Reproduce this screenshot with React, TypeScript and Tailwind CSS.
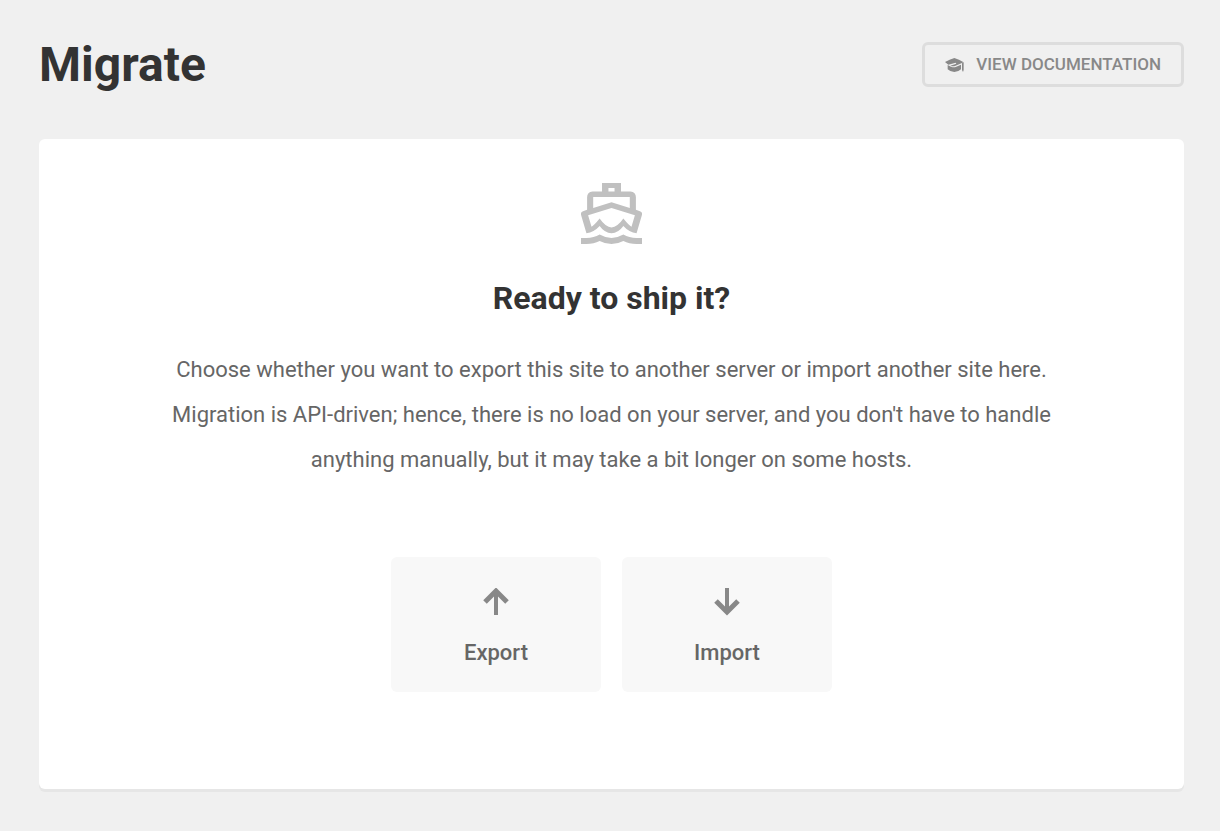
import { ReactNode } from "react";

function ShipIcon() {
  return (
    <svg viewBox="0 0 180 180" className="size-[61px]" fill="currentColor" aria-hidden="true">
      <path
        fillRule="evenodd"
        d="M62 0H118V25H146Q162 27 162 42V79L174 83Q182 86 180 94L164 148Q142 146 125 127Q110 148 90 148Q70 148 55 127Q38 146 16 148L0 94Q-2 86 6 83L18 79V42Q18 27 34 25H62ZM81 15V25H99V15ZM36 41V74L90 57L144 74V41ZM90 74L21 95L31 129Q38 126 55 105Q73 131 90 131Q107 131 125 105Q142 126 149 129L159 95Z"
      />
      <path d="M0 162H16Q38 162 55 152Q72 162 90 162Q108 162 125 152Q142 162 164 162H180V180H164Q142 180 125 171Q108 180 90 180Q72 180 55 171Q38 180 16 180H0Z" />
    </svg>
  );
}

function CapIcon() {
  return (
    <svg viewBox="0 0 57 42" className="h-[14px] w-[19px]" fill="currentColor" aria-hidden="true">
      <path d="M0 12Q14 5 28 0Q42 4 56 13L30 24Q24 26 16 23L34 17L32 14L10 20Z" />
      <path d="M8 21L18 26Q26 29 32 27L48 20V34Q40 42 28 42Q16 42 8 34Z" />
      <path d="M51 16L56 13V36L54 42L51 36Z" />
    </svg>
  );
}

function ArrowIcon({ down = false }: { down?: boolean }) {
  return (
    <svg viewBox="0 0 26 28" className="h-7 w-[26px] text-[#888]" fill="none" stroke="currentColor" aria-hidden="true">
      <path strokeWidth="4" d={down ? "M13 0V24" : "M13 27V3"} />
      <path strokeWidth="5" d={down ? "M2 13L13 24L24 13" : "M2 14L13 3L24 14"} />
    </svg>
  );
}

function ActionButton({ label, icon }: { label: string; icon: ReactNode }) {
  return (
    <button type="button" className="flex h-[135px] w-[210px] flex-col items-center rounded-md bg-[#f8f8f8] pt-[31px] font-medium text-[#666] hover:bg-[#f2f2f2]">
      {icon}
      <span className="mt-[21px] text-[22px] leading-8">{label}</span>
    </button>
  );
}

function App() {
  return (
    <div className="min-h-screen bg-[#f0f0f0] px-9 pt-[42px] pb-10 font-['Roboto',sans-serif] sm:pr-9 sm:pl-[39px]">
      <header className="flex flex-wrap items-center justify-between gap-4">
        <h1 className="text-5xl leading-[45px] font-bold text-[#333]">Migrate</h1>
        <a href="#documentation" className="flex h-[45px] items-center gap-3 rounded-md border-3 border-[#ddd] px-5 text-[17px] font-medium text-[#888] uppercase">
          <CapIcon />
          View Documentation
        </a>
      </header>

      <main className="mt-[52px] flex flex-col items-center rounded-md bg-white px-8 pt-11 pb-[97px] text-center shadow-[0_3px_0_#e6e6e6]">
        <div className="text-[#c0c0c0]">
          <ShipIcon />
        </div>
        <h2 className="mt-8 text-[32px] leading-[45px] font-bold text-[#333]">Ready to ship it?</h2>
        <p className="mt-[26px] max-w-[900px] text-[22px] leading-[45px] text-[#666]">
          Choose whether you want to export this site to another server or import another site here. Migration is API-driven; hence, there is no load on your server, and you don't have to handle anything manually, but it may take a bit longer on some hosts.
        </p>
        <div className="mt-[75px] flex flex-wrap justify-center gap-[21px]">
          <ActionButton label="Export" icon={<ArrowIcon />} />
          <ActionButton label="Import" icon={<ArrowIcon down />} />
        </div>
      </main>
    </div>
  );
}

export default App;
